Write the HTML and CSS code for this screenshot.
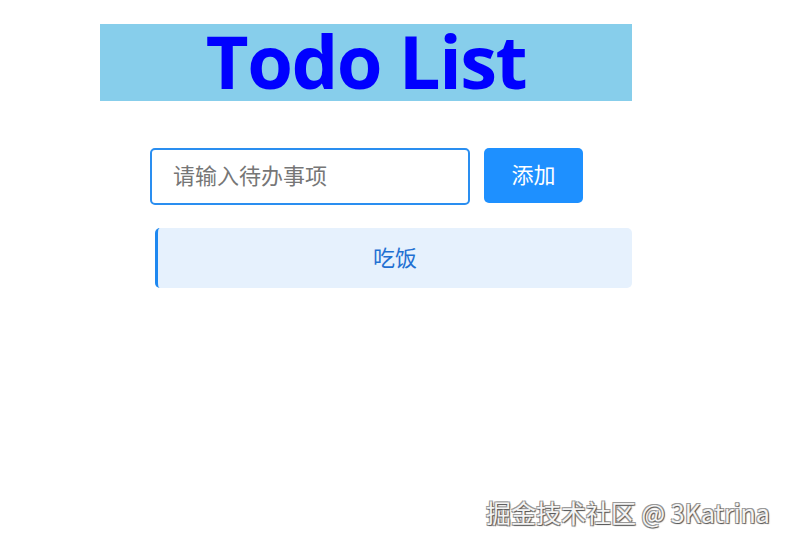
FILE: index.html
```html
<!DOCTYPE html>
<html lang="zh">
<head>
<meta charset="utf-8">
<title>Todo List</title>
<link rel="stylesheet" href="styles.css">
</head>
<body>
<div class="app">
  <h1 class="title">Todo List</h1>
  <div class="form">
    <input class="input" type="text" placeholder="请输入待办事项">
    <button class="add">添加</button>
  </div>
  <ul class="list">
    <li class="item">吃饭</li>
  </ul>
</div>
<div class="watermark">掘金技术社区 @ 3Katrina</div>
</body>
</html>
```
FILE: styles.css
```css
html, body {
  margin: 0;
  padding: 0;
  background: #ffffff;
}
body {
  width: 790px;
  height: 546px;
  position: relative;
  overflow: hidden;
  font-family: "Noto Sans CJK SC", "Noto Sans", sans-serif;
}
.app {
  width: 532px;
  margin-left: 100px;
  padding-top: 24px;
}
.title {
  margin: 0;
  height: 73px;
  padding-bottom: 4px;
  background: #87ceeb;
  color: #0000ff;
  font-family: "Open Sans", "Noto Sans", sans-serif;
  font-weight: 700;
  font-size: 74px;
  line-height: 73px;
  text-align: center;
  letter-spacing: -1.5px;
}
.form {
  display: flex;
  gap: 14px;
  margin-top: 47px;
  padding-left: 50px;
}
.input {
  box-sizing: border-box;
  width: 320px;
  height: 57px;
  border: 2px solid #2a8ef0;
  border-radius: 5px;
  padding: 0 0 5px 21px;
  font-family: "Noto Sans CJK SC", sans-serif;
  font-size: 22px;
  color: #333;
  outline: none;
  background: #fff;
}
.input::placeholder {
  color: #767676;
}
.add {
  box-sizing: border-box;
  width: 99px;
  height: 55px;
  border: none;
  border-radius: 5px;
  background: #1e90ff;
  color: #ffffff;
  font-family: "Noto Sans CJK SC", sans-serif;
  font-size: 22px;
  padding: 0 0 5px 0;
}
.list {
  list-style: none;
  margin: 23px 0 0 0;
  padding: 0 0 0 55px;
}
.item {
  box-sizing: border-box;
  height: 60px;
  background: #e6f1fd;
  border-left: 3px solid #1e88f0;
  border-radius: 5px;
  color: #1f70d2;
  font-size: 22px;
  line-height: 56px;
  text-align: center;
}
.watermark {
  position: absolute;
  left: 486px;
  top: 494px;
  font-family: "Noto Sans CJK SC", sans-serif;
  font-size: 25px;
  line-height: 36px;
  color: #f4f4f4;
  text-shadow: 1px 1px 1px #555, -1px -1px 0 #999, 1px -1px 0 #999, -1px 1px 0 #999;
  white-space: nowrap;
}
```
